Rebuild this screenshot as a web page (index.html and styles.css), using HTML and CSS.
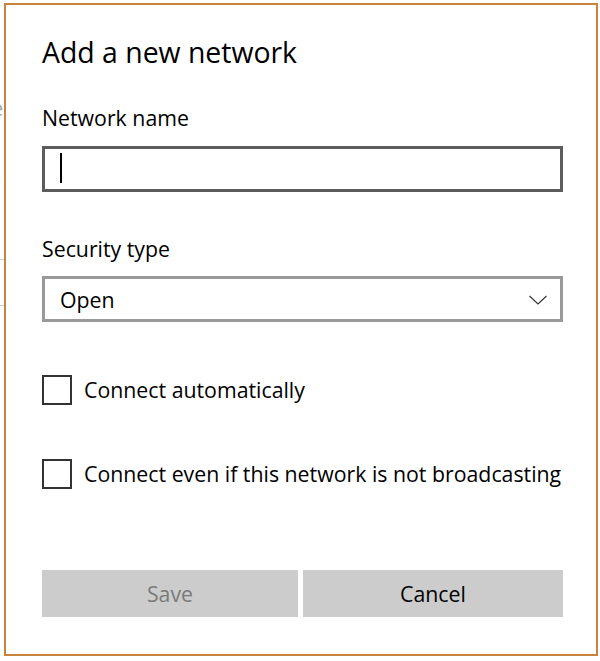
FILE: index.html
```html
<html>
<head>
    <meta name="viewport" content="width=600">
    <title>Add a new network</title>
    <link rel="stylesheet" href="styles.css">
</head>
<body>
    <div class="backdrop">
        <span class="peek peek-e">e</span>
        <span class="peek peek-slash">/</span>
        <span class="peek-line peek-line-a"></span>
        <span class="peek-line peek-line-b"></span>
    </div>
    <article class="dialog">
        <h1 class="title">Add a new network</h1>
        <label class="label label-name">Network name</label>
        <div class="textbox"><span class="caret"></span></div>
        <label class="label label-security">Security type</label>
        <div class="select">
            <span>Open</span>
            <svg class="chevron" width="18" height="10" viewBox="0 0 18 10">
                <polyline points="0.5,1 9,9 17.5,1" fill="none" stroke="#333" stroke-width="1.1"/>
            </svg>
        </div>
        <div class="check check-auto"><span class="box"></span>Connect automatically</div>
        <div class="check check-hidden"><span class="box"></span>Connect even if this network is not broadcasting</div>
        <div class="buttons">
            <button class="btn btn-disabled">Save</button>
            <button class="btn">Cancel</button>
        </div>
    </article>
</body>
</html>
```

FILE: styles.css
```css
html, body {
    margin: 0;
    padding: 0;
    background: #fff;
    font-family: 'Open Sans', 'Noto Sans', sans-serif;
    color: #000;
}
body {
    display: flex;
    width: 600px;
    height: 661px;
    overflow: hidden;
}
.backdrop {
    position: relative;
    width: 4px;
    flex: none;
    overflow: hidden;
}
.peek {
    position: absolute;
    color: #aaa;
    font-size: 22px;
}
.peek-e {
    top: 92px;
    left: -9px;
}
.peek-slash {
    top: 172px;
    left: -8px;
}
.peek-line {
    position: absolute;
    left: 0;
    width: 4px;
    height: 1px;
    background: #ccc;
}
.peek-line-a { top: 259px; }
.peek-line-b { top: 305px; }

.dialog {
    box-sizing: border-box;
    margin-top: 3px;
    width: 594px;
    height: 653px;
    border: 2px solid #c8843c;
    padding: 0 33px 0 36px;
    display: flex;
    flex-direction: column;
}
.title {
    margin: 27px 0 0;
    font-size: 28.4px;
    font-weight: 400;
    line-height: 40px;
}
.label {
    display: block;
    font-size: 21.3px;
    line-height: 28px;
}
.label-name {
    margin-top: 32px;
}
.textbox {
    box-sizing: border-box;
    margin-top: 14px;
    height: 46px;
    border: 3px solid #5c5c5c;
    padding: 4px 0 0 15px;
}
.caret {
    display: block;
    width: 2px;
    height: 30px;
    background: #000;
}
.label-security {
    margin-top: 43px;
}
.select {
    box-sizing: border-box;
    margin-top: 13px;
    height: 46px;
    border: 3px solid #999;
    padding: 0 13px 0 15px;
    display: flex;
    align-items: center;
    justify-content: space-between;
    font-size: 21.3px;
}
.chevron {
    margin-top: 1px;
}
.check {
    display: flex;
    align-items: center;
    gap: 12px;
    font-size: 21.3px;
    line-height: 30px;
}
.check-auto {
    margin-top: 53px;
}
.check-hidden {
    margin-top: 54px;
}
.box {
    box-sizing: border-box;
    width: 30px;
    height: 30px;
    border: 2px solid #333;
}
.buttons {
    margin-top: 81px;
    display: grid;
    grid-template-columns: 256px 1fr;
    gap: 5px;
}
.btn {
    height: 47px;
    border: none;
    background: #ccc;
    font-family: inherit;
    font-size: 21.3px;
    color: #000;
    padding: 0;
}
.btn-disabled {
    color: #7a7a7a;
}
```
